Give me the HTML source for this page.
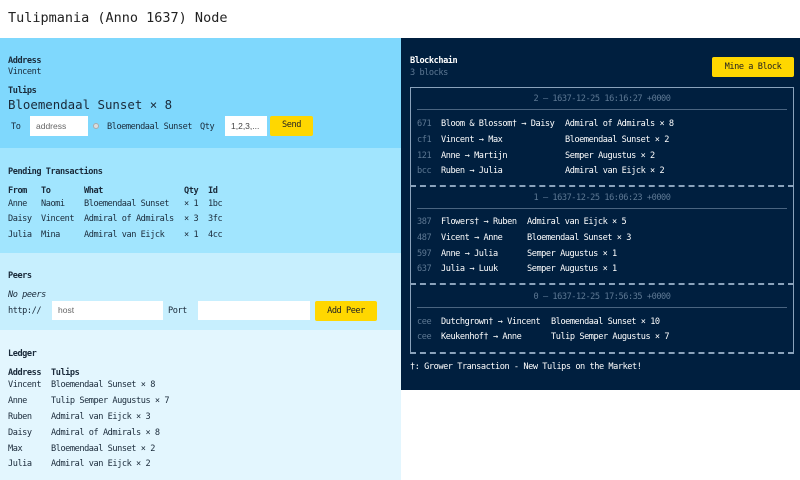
<!DOCTYPE html>
<html><head><meta charset="utf-8"><style>
*{margin:0;padding:0;box-sizing:border-box}
body{width:800px;height:480px;position:relative;background:#fff;font-family:"DejaVu Sans Mono","Liberation Mono",monospace;font-size:8.6px;letter-spacing:-0.45px;color:#1a2a3a;overflow:hidden}
.a{position:absolute;white-space:pre;line-height:10px}
.b{font-weight:bold}
.bg{position:absolute;left:0;width:401px}
.in{position:absolute;background:#fff;font-family:"Liberation Sans",sans-serif;font-size:8.5px;letter-spacing:0;color:#666;line-height:20px;padding-left:6px}
.btn{position:absolute;background:#ffd700;border-radius:2px;text-align:center;color:#222}
.w{color:#fff}
.g{color:#5d7893}
.hr{position:absolute;left:417px;width:370px;height:1px;background:#4a6480}
.d{position:absolute;left:410px;width:384px;border-top:2px dashed #8aa2bb}
</style></head><body>
<div class="a" style="left:8px;top:10px;font-size:13.5px;letter-spacing:0;line-height:16px;color:#222">Tulipmania (Anno 1637) Node</div>

<div class="bg" style="top:38px;height:110px;background:#7fd8fd"></div>
<div class="bg" style="top:148px;height:105px;background:#a1e5fe"></div>
<div class="bg" style="top:253px;height:77px;background:#c7effe"></div>
<div class="bg" style="top:330px;height:150px;background:#e3f6fe"></div>

<div class="a b" style="left:8px;top:56px">Address</div>
<div class="a" style="left:8px;top:67px">Vincent</div>
<div class="a b" style="left:8px;top:86px">Tulips</div>
<div class="a" style="left:8px;top:97px;font-size:12.4px;letter-spacing:0;line-height:16px">Bloemendaal Sunset × 8</div>
<div class="a" style="left:11px;top:122px">To</div>
<div class="in" style="left:30px;top:116px;width:58px;height:20px">address</div>
<div style="position:absolute;left:93px;top:123px;width:6px;height:6px;border-radius:50%;background:#ddd;border:1px solid #aaa"></div>
<div class="a" style="left:107px;top:122px">Bloemendaal Sunset</div>
<div class="a" style="left:200px;top:122px">Qty</div>
<div class="in" style="left:225px;top:116px;width:42px;height:20px;color:#444">1,2,3,...</div>
<div class="btn" style="left:270px;top:116px;width:43px;height:20px;line-height:19px">Send</div>

<div class="a b" style="left:8px;top:167px">Pending Transactions</div>
<div class="a b" style="left:8px;top:186px">From</div><div class="a b" style="left:41px;top:186px">To</div><div class="a b" style="left:84px;top:186px">What</div><div class="a b" style="left:184px;top:186px">Qty</div><div class="a b" style="left:208px;top:186px">Id</div>
<div class="a" style="left:8px;top:199px">Anne</div><div class="a" style="left:41px;top:199px">Naomi</div><div class="a" style="left:84px;top:199px">Bloemendaal Sunset</div><div class="a" style="left:184px;top:199px">× 1</div><div class="a" style="left:208px;top:199px">1bc</div>
<div class="a" style="left:8px;top:214px">Daisy</div><div class="a" style="left:41px;top:214px">Vincent</div><div class="a" style="left:84px;top:214px">Admiral of Admirals</div><div class="a" style="left:184px;top:214px">× 3</div><div class="a" style="left:208px;top:214px">3fc</div>
<div class="a" style="left:8px;top:230px">Julia</div><div class="a" style="left:41px;top:230px">Mina</div><div class="a" style="left:84px;top:230px">Admiral van Eijck</div><div class="a" style="left:184px;top:230px">× 1</div><div class="a" style="left:208px;top:230px">4cc</div>

<div class="a b" style="left:8px;top:271px">Peers</div>
<div class="a" style="left:8px;top:290px;font-style:italic">No peers</div>
<div class="a" style="left:8px;top:306px">http://</div>
<div class="in" style="left:52px;top:301px;width:111px;height:19px;line-height:19px">host</div>
<div class="a" style="left:168px;top:306px">Port</div>
<div class="in" style="left:198px;top:301px;width:112px;height:19px"></div>
<div class="btn" style="left:315px;top:301px;width:62px;height:20px;line-height:20px">Add Peer</div>

<div class="a b" style="left:8px;top:349px">Ledger</div>
<div class="a b" style="left:8px;top:368px">Address</div><div class="a b" style="left:51px;top:368px">Tulips</div>
<div class="a" style="left:8px;top:380px">Vincent</div><div class="a" style="left:51px;top:380px">Bloemendaal Sunset × 8</div>
<div class="a" style="left:8px;top:396px">Anne</div><div class="a" style="left:51px;top:396px">Tulip Semper Augustus × 7</div>
<div class="a" style="left:8px;top:412px">Ruben</div><div class="a" style="left:51px;top:412px">Admiral van Eijck × 3</div>
<div class="a" style="left:8px;top:428px">Daisy</div><div class="a" style="left:51px;top:428px">Admiral of Admirals × 8</div>
<div class="a" style="left:8px;top:444px">Max</div><div class="a" style="left:51px;top:444px">Bloemendaal Sunset × 2</div>
<div class="a" style="left:8px;top:459px">Julia</div><div class="a" style="left:51px;top:459px">Admiral van Eijck × 2</div>

<div style="position:absolute;left:401px;top:38px;width:399px;height:352px;background:#001f3f"></div>
<div class="a b w" style="left:410px;top:56px">Blockchain</div>
<div class="a g" style="left:410px;top:68px">3 blocks</div>
<div class="btn" style="left:712px;top:57px;width:82px;height:20px;line-height:20px">Mine a Block</div>
<div style="position:absolute;left:410px;top:87px;width:384px;height:267px;border:1px solid #8aa2bb;border-bottom:2px dashed #8aa2bb"></div>

<div class="a g" style="left:410px;width:384px;text-align:center;top:94px">2 — 1637-12-25 16:16:27 +0000</div>
<div class="hr" style="top:109px"></div>
<div class="a g" style="left:417px;top:119px">671</div><div class="a w" style="left:441px;top:119px">Bloom &amp; Blossom† → Daisy</div><div class="a w" style="left:565px;top:119px">Admiral of Admirals × 8</div>
<div class="a g" style="left:417px;top:135px">cf1</div><div class="a w" style="left:441px;top:135px">Vincent → Max</div><div class="a w" style="left:565px;top:135px">Bloemendaal Sunset × 2</div>
<div class="a g" style="left:417px;top:151px">121</div><div class="a w" style="left:441px;top:151px">Anne → Martijn</div><div class="a w" style="left:565px;top:151px">Semper Augustus × 2</div>
<div class="a g" style="left:417px;top:166px">bcc</div><div class="a w" style="left:441px;top:166px">Ruben → Julia</div><div class="a w" style="left:565px;top:166px">Admiral van Eijck × 2</div>
<div class="d" style="top:185px"></div>

<div class="a g" style="left:410px;width:384px;text-align:center;top:193px">1 — 1637-12-25 16:06:23 +0000</div>
<div class="hr" style="top:208px"></div>
<div class="a g" style="left:417px;top:217px">387</div><div class="a w" style="left:441px;top:217px">Flowers† → Ruben</div><div class="a w" style="left:527px;top:217px">Admiral van Eijck × 5</div>
<div class="a g" style="left:417px;top:233px">487</div><div class="a w" style="left:441px;top:233px">Vicent → Anne</div><div class="a w" style="left:527px;top:233px">Bloemendaal Sunset × 3</div>
<div class="a g" style="left:417px;top:249px">597</div><div class="a w" style="left:441px;top:249px">Anne → Julia</div><div class="a w" style="left:527px;top:249px">Semper Augustus × 1</div>
<div class="a g" style="left:417px;top:264px">637</div><div class="a w" style="left:441px;top:264px">Julia → Luuk</div><div class="a w" style="left:527px;top:264px">Semper Augustus × 1</div>
<div class="d" style="top:283px"></div>

<div class="a g" style="left:410px;width:384px;text-align:center;top:292px">0 — 1637-12-25 17:56:35 +0000</div>
<div class="hr" style="top:307px"></div>
<div class="a g" style="left:417px;top:317px">cee</div><div class="a w" style="left:441px;top:317px">Dutchgrown† → Vincent</div><div class="a w" style="left:551px;top:317px">Bloemendaal Sunset × 10</div>
<div class="a g" style="left:417px;top:332px">cee</div><div class="a w" style="left:441px;top:332px">Keukenhof† → Anne</div><div class="a w" style="left:551px;top:332px">Tulip Semper Augustus × 7</div>

<div class="a w" style="left:410px;top:362px">†: Grower Transaction - New Tulips on the Market!</div>
</body></html>
